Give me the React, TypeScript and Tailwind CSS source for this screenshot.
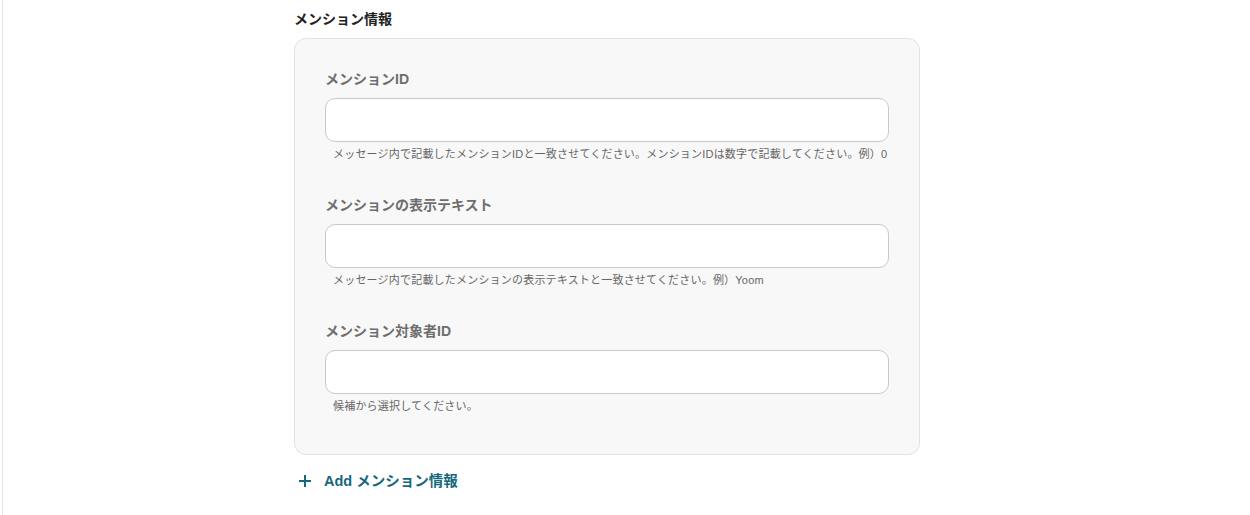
import React from "react";

const font = { fontFamily: '"Liberation Sans", "Noto Sans CJK JP", "Noto Sans", sans-serif' };

function Field({ label, help }: { label: string; help: string }) {
  return (
    <div className="flex flex-col">
      <div className="text-[14px] leading-[20px] font-bold text-[#6e6e6e] translate-y-[1px]">{label}</div>
      <input
        className="mt-[10px] h-[44px] w-full rounded-[10px] border border-[#c9c9c9] bg-white px-3 outline-none"
        type="text"
      />
      <div className="mt-[4px] pl-2 text-[11px] leading-[16px] text-[#666666] tracking-[0.2px]">{help}</div>
    </div>
  );
}

export default function App() {
  return (
    <div className="min-h-[515px] w-[1250px] bg-white" style={font}>
      <div className="ml-[2px] min-h-[515px] border-l border-[#e6e6e6] pl-[291px] pt-[9px]">
        <div className="w-[626px]">
          <div className="text-[14px] leading-[20px] font-bold text-[#222222]">メンション情報</div>
          <div className="mt-[9px] rounded-[12px] border border-[#e2e2e2] bg-[#f8f8f8] px-[30px] pt-[29px] pb-[40px]">
            <div className="flex flex-col gap-[32px]">
              <Field
                label="メンションID"
                help="メッセージ内で記載したメンションIDと一致させてください。メンションIDは数字で記載してください。例）0"
              />
              <Field
                label="メンションの表示テキスト"
                help="メッセージ内で記載したメンションの表示テキストと一致させてください。例）Yoom"
              />
              <Field label="メンション対象者ID" help="候補から選択してください。" />
            </div>
          </div>
          <button className="mt-[16px] flex items-center gap-[12px] pl-[4px] text-[14.5px] leading-[20px] font-bold text-[#17677e]">
            <svg width="14" height="14" viewBox="0 0 14 14" fill="none">
              <path d="M7 1v12M1 7h12" stroke="#17677e" strokeWidth="2" strokeLinecap="butt" />
            </svg>
            <span>Add メンション情報</span>
          </button>
        </div>
      </div>
    </div>
  );
}
